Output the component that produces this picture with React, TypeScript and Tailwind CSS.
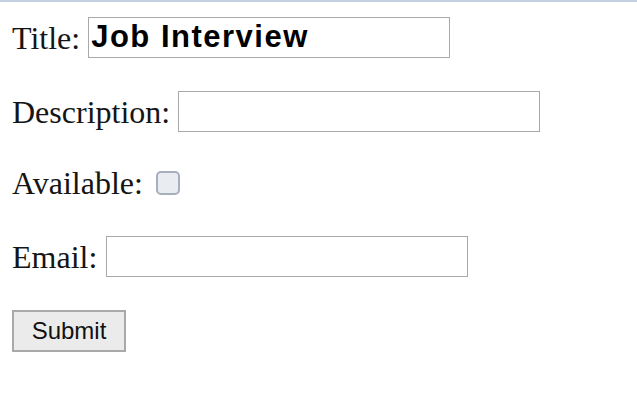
import React from "react";

export default function App() {
  return (
    <div className="w-[637px] h-[406px] bg-white overflow-hidden font-['Liberation_Serif',serif] text-[32px] text-[#151515]">
      <div className="h-[2px] bg-[#c3d0e1]" />
      <div className="pl-[12px]">
        <div className="mt-[15px] flex items-center h-[41px]">
          <span className="leading-[34px]">Title:</span>
          <input
            readOnly
            defaultValue="Job Interview"
            className="ml-[8px] w-[362px] h-[41px] border border-[#a9a9a9] bg-white px-[2px] font-['Liberation_Sans',sans-serif] font-bold text-[31px] tracking-[1.5px] text-black outline-none"
          />
        </div>
        <div className="mt-[33px] flex items-center h-[41px]">
          <span className="leading-[34px]">Description:</span>
          <input
            readOnly
            className="ml-[8px] w-[362px] h-[41px] border border-[#a9a9a9] bg-white outline-none"
          />
        </div>
        <div className="mt-[34px] flex items-center h-[34px]">
          <span className="leading-[34px]">Available:</span>
          <span className="ml-[13px] w-[24px] h-[24px] rounded-[5px] border-2 border-[#a7afbd] bg-[#e9ecf0]" />
        </div>
        <div className="mt-[36px] flex items-center h-[41px]">
          <span className="leading-[34px]">Email:</span>
          <input
            readOnly
            className="ml-[9px] w-[362px] h-[41px] border border-[#a9a9a9] bg-white outline-none"
          />
        </div>
        <div className="mt-[33px]">
          <button
            type="button"
            className="w-[114px] h-[42px] border-2 border-[#a9a9a9] bg-[#ebebeb] font-['Liberation_Sans',sans-serif] text-[24px] leading-none text-[#111] flex items-center justify-center"
          >
            Submit
          </button>
        </div>
      </div>
    </div>
  );
}
